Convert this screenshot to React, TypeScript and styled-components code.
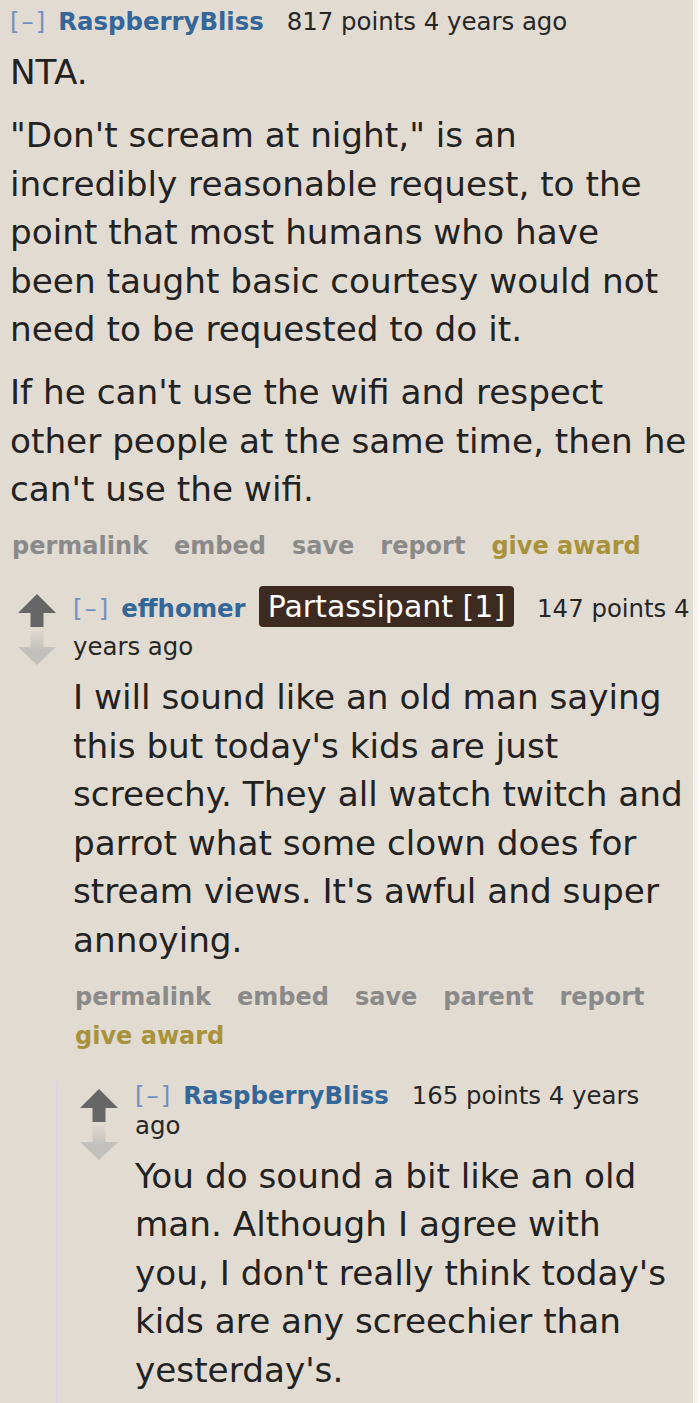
import React from 'react';
import styled, { createGlobalStyle } from 'styled-components';

const GlobalStyle = createGlobalStyle`
	html, body {
		margin: 0;
		padding: 0;
		background: #fbfaf7;
	}
	* {
		box-sizing: border-box;
	}
`;

const Page = styled.div`
	width: 697px;
	min-height: 1403px;
	background: #e2dbd2;
	border-right: 4px solid #f6f3ee;
	padding: 7px 0 0 10px;
	font-family: 'DejaVu Sans', Verdana, sans-serif;
	color: #222;
	overflow: hidden;
`;

const Comment = styled.div`
	display: flex;
	align-items: flex-start;
	margin-top: 20px;
`;

const Midcol = styled.div`
	width: 63px;
	flex: none;
	display: flex;
	flex-direction: column;
	align-items: flex-start;
	padding: 8px 0 0 8px;
	gap: 3px;
`;

const Entry = styled.div<{ $inset?: number }>`
	flex: 1;
	min-width: 0;
	padding-right: ${({ $inset }) => $inset ?? 0}px;
`;

const Tagline = styled.div`
	font-size: 24.4px;
	line-height: 30px;
	color: #262626;
`;

const Expand = styled.span`
	color: #7191c2;
	letter-spacing: 2px;
	margin-right: 11px;
`;

const Author = styled.span`
	color: #336699;
	font-weight: bold;
	margin-right: 13px;
`;

const Flair = styled.span`
	display: inline-block;
	background: #3d2a21;
	color: #fff;
	font-size: 30px;
	line-height: 33px;
	padding: 4px 9px;
	border-radius: 4px;
	margin: 0 13px 5px 0;
`;

const Score = styled.span`
	margin-left: 10px;
`;

const Body = styled.div`
	font-size: 34.25px;
	line-height: 48.5px;
	margin-top: 11px;
	padding-right: 4px;

	p {
		margin: 0 0 14.5px;
	}
`;

const Buttons = styled.ul`
	list-style: none;
	margin: -1px 0 0;
	padding: 0 0 0 2px;
	display: flex;
	flex-wrap: wrap;
	column-gap: 26px;
	font-weight: bold;
	font-size: 24px;
	line-height: 39px;
`;

const Button = styled.li<{ $award?: boolean }>`
	color: ${({ $award }) => ($award ? '#a8923a' : '#8a8a8a')};
`;

const Child = styled.div`
	margin-left: -17px;
	margin-top: 25px;
	padding-left: 14px;
	border-left: 2px solid #d6d3ea;

	${Comment} {
		margin-top: 0;
	}
`;

const Arrow = ({ down }: { down?: boolean }) => (
	<svg width="38" height="34" viewBox="0 0 38 34">
		<defs>
			<linearGradient id="fade" x1="0" y1="0" x2="0" y2="1">
				<stop offset="0" stopColor="#c8c5c1" stopOpacity="0.2" />
				<stop offset="0.55" stopColor="#c2c0bd" />
				<stop offset="1" stopColor="#c2c0bd" />
			</linearGradient>
		</defs>
		{down ? (
			<path d="M12.5 0 H25.5 V16 H38 L19 34 L0 16 H12.5 Z" fill="url(#fade)" />
		) : (
			<path d="M19 0 L38 19 H25.5 V33 H12.5 V19 H0 Z" fill="#666666" />
		)}
	</svg>
);

const Votes = () => (
	<Midcol>
		<Arrow />
		<Arrow down />
	</Midcol>
);

export default function App() {
	return (
		<>
			<GlobalStyle />
			<Page>
				<Entry>
					<Tagline>
						<Expand>[–]</Expand>
						<Author>RaspberryBliss</Author>
						<Score>817 points 4 years ago</Score>
					</Tagline>
					<Body>
						<p>NTA.</p>
						<p>
							"Don't scream at night," is an incredibly reasonable request, to the point that
							most humans who have been taught basic courtesy would not need to be requested to
							do it.
						</p>
						<p>
							If he can't use the wifi and respect other people at the same time, then he can't
							use the wifi.
						</p>
					</Body>
					<Buttons>
						<Button>permalink</Button>
						<Button>embed</Button>
						<Button>save</Button>
						<Button>report</Button>
						<Button $award>give award</Button>
					</Buttons>
				</Entry>
				<Comment>
					<Votes />
					<Entry>
						<Tagline>
							<Expand>[–]</Expand>
							<Author>effhomer</Author>
							<Flair>Partassipant [1]</Flair>
							<Score>147 points 4 years ago</Score>
						</Tagline>
						<Body>
							<p>
								I will sound like an old man saying this but today's kids are just screechy.
								They all watch twitch and parrot what some clown does for stream views. It's
								awful and super annoying.
							</p>
						</Body>
						<Buttons>
							<Button>permalink</Button>
							<Button>embed</Button>
							<Button>save</Button>
							<Button>parent</Button>
							<Button>report</Button>
							<Button $award>give award</Button>
						</Buttons>
						<Child>
							<Comment>
								<Votes />
								<Entry $inset={14}>
									<Tagline>
										<Expand>[–]</Expand>
										<Author>RaspberryBliss</Author>
										<Score>165 points 4 years ago</Score>
									</Tagline>
									<Body>
										<p>
											You do sound a bit like an old man. Although I agree with you, I don't
											really think today's kids are any screechier than yesterday's.
										</p>
									</Body>
								</Entry>
							</Comment>
						</Child>
					</Entry>
				</Comment>
			</Page>
		</>
	);
}
